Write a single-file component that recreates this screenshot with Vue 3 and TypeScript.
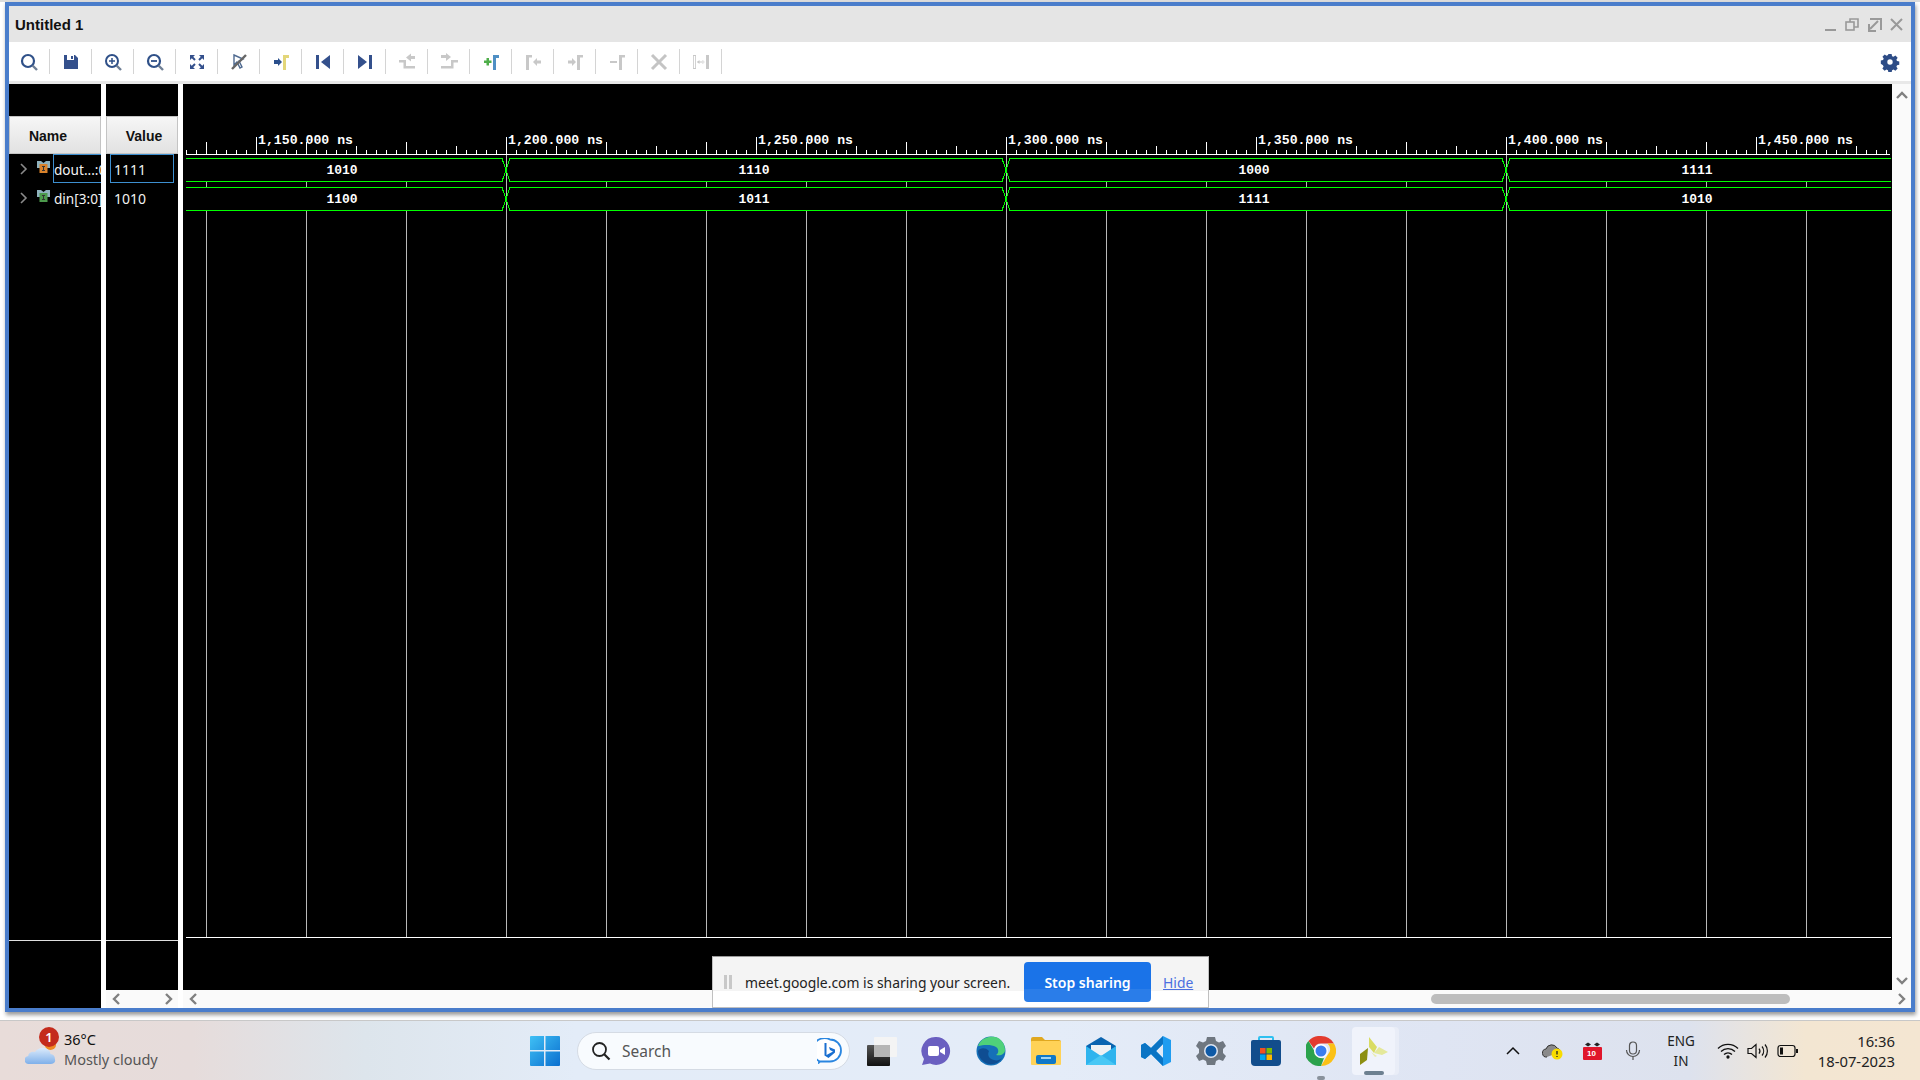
<script setup lang="ts">
interface SignalRow {
  name: string
  value: string
  selected: boolean
  kind: 'out' | 'in'
}

const rows: SignalRow[] = [
  { name: 'dout...:0', value: '1111', selected: true, kind: 'out' },
  { name: 'din[3:0]', value: '1010', selected: false, kind: 'in' }
]

const start = 186
const end = 1891
const edges = [506, 1006, 1506]

const busRows = [
  { top: 158.5, bottom: 181.5, mid: 174, values: ['1010', '1110', '1000', '1111'] },
  { top: 187.5, bottom: 210.5, mid: 203, values: ['1100', '1011', '1111', '1010'] }
]
const valueX = [342, 754, 1254, 1697]

const labels = [
  { x: 257, text: '1,150.000 ns' },
  { x: 507, text: '1,200.000 ns' },
  { x: 757, text: '1,250.000 ns' },
  { x: 1007, text: '1,300.000 ns' },
  { x: 1257, text: '1,350.000 ns' },
  { x: 1507, text: '1,400.000 ns' },
  { x: 1757, text: '1,450.000 ns' }
]

const smallTicks: number[] = []
for (let x = start; x <= end; x += 10) smallTicks.push(x + 0.5)

const mediumTicks: number[] = []
for (let x = 206; x <= end; x += 50) mediumTicks.push(x + 0.5)

const gridLines: number[] = []
for (let x = 206; x <= 1806; x += 100) gridLines.push(x + 0.5)

function busPath(top: number, bottom: number, from: number): string {
  let d = `M${start} ${from}`
  let y = from
  for (const e of edges) {
    y = y === top ? bottom : top
    d += `H${e - 4}L${e + 4} ${y}`
  }
  return d + `H${end}`
}

const apps = ['teams', 'edge', 'explorer', 'mail', 'code', 'settings', 'store', 'chrome']
</script>

<template>
  <div class="screen">
    <div class="window">
      <div class="titlebar">
        <span class="title">Untitled 1</span>
        <div class="win-controls">
          <svg width="22" height="18" viewBox="0 0 22 18"><path d="M5 14h11" stroke="#999" stroke-width="2" /></svg>
          <svg width="22" height="18" viewBox="0 0 22 18" fill="none" stroke="#999" stroke-width="1.6"><rect x="4" y="6" width="8" height="8" /><path d="M8 6V3h8v8h-4" /></svg>
          <svg width="22" height="18" viewBox="0 0 22 18" fill="none" stroke="#999" stroke-width="2"><path d="M6 3h11v11M14 5l-8 8M5 8v7h7" /></svg>
          <svg width="22" height="18" viewBox="0 0 22 18" fill="none" stroke="#999" stroke-width="2"><path d="M5 3l11 11M16 3L5 14" /></svg>
        </div>
      </div>

      <div class="toolbar">
        <button class="tool">
          <svg width="20" height="20" viewBox="0 0 20 20" fill="none"><circle cx="9" cy="9" r="6" stroke="#2f5088" stroke-width="2.200" /><path d="M13.500 13.500L18 18" stroke="#6f7f95" stroke-width="2.400" /></svg>
        </button>
        <button class="tool">
          <svg width="18" height="18" viewBox="0 0 18 18"><path d="M2 2h11l3 3v11H2z" fill="#34508c" /><rect x="5" y="2" width="7" height="5" fill="#fff" /><rect x="9" y="3" width="2" height="3" fill="#34508c" /></svg>
        </button>
        <button class="tool">
          <svg width="20" height="20" viewBox="0 0 20 20" fill="none"><circle cx="9" cy="9" r="6" stroke="#2f5088" stroke-width="2" /><path d="M6 9h6M9 6v6" stroke="#2f5088" stroke-width="1.500" /><path d="M13.500 13.500L18 18" stroke="#6f7f95" stroke-width="2.400" /></svg>
        </button>
        <button class="tool">
          <svg width="20" height="20" viewBox="0 0 20 20" fill="none"><circle cx="9" cy="9" r="6" stroke="#2f5088" stroke-width="2.200" /><path d="M6 9h6" stroke="#2f5088" stroke-width="1.800" /><path d="M13.500 13.500L18 18" stroke="#6f7f95" stroke-width="2.400" /></svg>
        </button>
        <button class="tool">
          <svg width="18" height="18" viewBox="0 0 18 18" fill="#34508c" stroke="none">
            <path d="M2 2h5L2 7zM16 2v5l-5-5zM2 16v-5l5 5zM16 16h-5l5-5z" />
            <path d="M4 4l3 3M14 4l-3 3M4 14l3-3M14 14l-3-3" stroke="#34508c" stroke-width="2" fill="none" />
          </svg>
        </button>
        <button class="tool">
          <svg width="20" height="20" viewBox="0 0 20 20" fill="none"><path d="M5 3l9 4-4 2 3 6-2 1-3-6-3 3z" stroke="#4f6a90" stroke-width="1.400" /><path d="M3 17L17 3" stroke="#666" stroke-width="2.400" /></svg>
        </button>
        <button class="tool">
          <svg width="20" height="20" viewBox="0 0 20 20"><path d="M3 8h4V6l4 4-4 4v-2H3z" fill="#2a4f8c" /><path d="M12 18V3h6v3h-3v12z" fill="#e3d679" /></svg>
        </button>
        <button class="tool">
          <svg width="18" height="18" viewBox="0 0 18 18" fill="#34508c"><rect x="2" y="2" width="3" height="14" /><path d="M16 2v14L7 9z" /></svg>
        </button>
        <button class="tool">
          <svg width="18" height="18" viewBox="0 0 18 18" fill="#34508c"><rect x="13" y="2" width="3" height="14" /><path d="M2 2v14l9-7z" /></svg>
        </button>
        <button class="tool">
          <svg width="20" height="20" viewBox="0 0 20 20" fill="#c8c8c8"><path d="M2 8h7v6h9v2.500H6.500v-6H2zM18 4v3h-4v2.500l-5-4 5-4V4z" /></svg>
        </button>
        <button class="tool">
          <svg width="20" height="20" viewBox="0 0 20 20" fill="#c8c8c8"><path d="M2 3h5V1l5 4-5 4V6H2zM2 14h10V8h7v2.500h-4.500V16.500H2z" /></svg>
        </button>
        <button class="tool">
          <svg width="20" height="20" viewBox="0 0 20 20"><path d="M3 8.500h2.500V6H8v2.500h2.500V11H8v2.500H5.500V11H3z" fill="#4fae4a" /><path d="M12 18V3h6v3h-3v12z" fill="#4f8fc4" /></svg>
        </button>
        <button class="tool">
          <svg width="20" height="20" viewBox="0 0 20 20" fill="#c8c8c8"><path d="M3 18V3h6v2.500H6V18zM18 8.500v3h-4V14l-4-4 4-4v2.500z" /></svg>
        </button>
        <button class="tool">
          <svg width="20" height="20" viewBox="0 0 20 20" fill="#c8c8c8"><path d="M3 8.500h4V6l4 4-4 4v-2.500H3zM12 18V3h6v2.500h-3V18z" /></svg>
        </button>
        <button class="tool">
          <svg width="20" height="20" viewBox="0 0 20 20" fill="#c8c8c8"><path d="M3 9h7v2H3zM12 18V3h6v2.500h-3V18z" /></svg>
        </button>
        <button class="tool">
          <svg width="20" height="20" viewBox="0 0 20 20" fill="none" stroke="#c4c4c4" stroke-width="3"><path d="M3 3l14 14M17 3L3 17" /></svg>
        </button>
        <button class="tool">
          <svg width="20" height="20" viewBox="0 0 20 20" fill="#c8c8c8"><path d="M2 3h3v14H2zM2.800 4v12h1.400V4z" fill-rule="evenodd" /><path d="M15 3h3v14h-3z" /><path d="M6 9.600h8v.8H6zM6 10l2.500-2v4zM14 10l-2.500-2v4z" /></svg>
        </button>
        <svg class="gear" width="20" height="20" viewBox="0 0 20 20">
          <path fill="#2d4c86" fill-rule="evenodd" d="M8.200 1h3.600l.5 2.500 1.600.7 2.100-1.400 2.500 2.500-1.400 2.100.7 1.600 2.500.5v3.600l-2.500.5-.7 1.600 1.400 2.100-2.500 2.500-2.100-1.400-1.600.7-.5 2.500H8.200l-.5-2.500-1.600-.7-2.100 1.400-2.500-2.500 1.400-2.100-.7-1.600L-.2 11.900V8.300l2.500-.5.7-1.600-1.400-2.100 2.500-2.500 2.100 1.400 1.600-.7zM10 7a3 3 0 1 0 0 6 3 3 0 0 0 0-6z" transform="translate(1 1) scale(.9)" />
        </svg>
      </div>

      <div class="panes">
        <div class="col name-col">
          <div class="col-head">Name</div>
          <div class="col-rows">
            <div v-for="row in rows" :key="row.name" class="signal">
              <svg class="expander" width="10" height="14" viewBox="0 0 10 14" fill="none"><path d="M2 2l5 5-5 5" stroke="#8a8a8a" stroke-width="1.600" /></svg>
              <svg class="bus-icon" width="13" height="13" viewBox="0 0 13 13">
                <path d="M0 0h4l2.500 2L9 0h4v7H0z" fill="#8fb2bd" />
                <rect x="2.500" y="3" width="8" height="9" :fill="row.kind === 'out' ? '#d9822b' : '#4c9a4c'" />
                <path d="M5 5.500h3M6.500 5.500v4M5 9.500h3" stroke="#333" stroke-width="1" fill="none" />
              </svg>
              <span class="signal-name" :class="{ selected: row.selected }">{{ row.name }}</span>
            </div>
          </div>
        </div>

        <div class="col value-col">
          <div class="col-head">Value</div>
          <div class="col-rows">
            <div v-for="row in rows" :key="row.name" class="value-row" :class="{ selected: row.selected }">{{ row.value }}</div>
          </div>
          <div class="col-foot"></div>
          <div class="hscroll">
            <svg width="12" height="14" viewBox="0 0 12 14" fill="none"><path d="M9 2L4 7l5 5" stroke="#808080" stroke-width="2.400" /></svg>
            <svg width="12" height="14" viewBox="0 0 12 14" fill="none"><path d="M3 2l5 5-5 5" stroke="#808080" stroke-width="2.400" /></svg>
          </div>
        </div>

        <div class="wave-col">
          <div class="wave-main">
            <svg class="wave" width="1709" height="906" viewBox="183 84 1709 906">
              <g stroke="#fff" stroke-width="1" shape-rendering="crispEdges">
                <path :d="`M${start} 154.500H1890`" stroke-width="1" />
                <path v-for="x in smallTicks" :key="'s' + x" :d="`M${x} 150V155`" />
                <path v-for="x in mediumTicks" :key="'m' + x" :d="`M${x} 146V155`" />
                <path v-for="x in gridLines" :key="'g' + x" :d="`M${x} 142V155`" />
                <path v-for="l in labels" :key="'t' + l.x" :d="`M${l.x - 0.5} 137V155`" />
                <path :d="`M${start} 937.500H1891`" />
              </g>
              <g stroke="#b9b9b9" stroke-width="1" shape-rendering="crispEdges">
                <template v-for="x in gridLines" :key="'l' + x">
                  <path :d="`M${x} 182V187M${x} 211V937`" />
                </template>
                <path v-for="e in edges" :key="'e' + e" :d="`M${e + 0.5} 155V937`" />
              </g>
              <g fill="none" stroke="#00ff00" stroke-width="1" shape-rendering="crispEdges">
                <template v-for="bus in busRows" :key="bus.top">
                  <path :d="busPath(bus.top, bus.bottom, bus.top)" />
                  <path :d="busPath(bus.top, bus.bottom, bus.bottom)" />
                </template>
              </g>
              <g class="wave-text">
                <text v-for="l in labels" :key="l.text" class="ruler-label" :x="l.x + 1" y="144">{{ l.text }}</text>
                <template v-for="bus in busRows" :key="'v' + bus.top">
                  <text v-for="(v, i) in bus.values" :key="i" :x="valueX[i]" :y="bus.mid" text-anchor="middle">{{ v }}</text>
                </template>
              </g>
            </svg>
            <div class="vscroll">
              <svg width="14" height="10" viewBox="0 0 14 10" fill="none"><path d="M2 8l5-5 5 5" stroke="#808080" stroke-width="2.400" /></svg>
              <svg width="14" height="10" viewBox="0 0 14 10" fill="none"><path d="M2 2l5 5 5-5" stroke="#808080" stroke-width="2.400" /></svg>
            </div>
          </div>
          <div class="hscroll wave-scroll">
            <svg width="12" height="14" viewBox="0 0 12 14" fill="none"><path d="M9 2L4 7l5 5" stroke="#808080" stroke-width="2.400" /></svg>
            <div class="thumb"></div>
            <svg width="12" height="14" viewBox="0 0 12 14" fill="none"><path d="M3 2l5 5-5 5" stroke="#808080" stroke-width="2.400" /></svg>
          </div>
        </div>
      </div>
    </div>

    <div class="sharebar">
      <span class="pause"><i></i><i></i></span>
      <span class="share-text">meet.google.com is sharing your screen.</span>
      <button class="stop">Stop sharing</button>
      <a class="hide">Hide</a>
    </div>

    <div class="taskbar">
      <div class="weather">
        <div class="weather-icon">
          <svg width="31" height="26" viewBox="0 0 28 26" preserveAspectRatio="none">
            <defs><linearGradient id="cloudFill" x1="0" y1="0" x2="0" y2="1"><stop offset="0" stop-color="#dcebfb" /><stop offset="1" stop-color="#7fb0ea" /></linearGradient></defs>
            <circle cx="23" cy="7" r="5" fill="#f08a24" />
            <path d="M4 26a4 4 0 0 1-1-8c0-3 3-5 6-4 2-4 9-6 12-2 1 1 2 2 2 4a5 5 0 0 1 4 5c1 3-1 5-4 5z" fill="url(#cloudFill)" />
          </svg>
          <span class="badge">1</span>
        </div>
        <div class="weather-text">
          <span class="temp">36°C</span>
          <span class="cond">Mostly cloudy</span>
        </div>
      </div>

      <svg class="start" width="30" height="30" viewBox="0 0 30 30">
        <defs><linearGradient id="winFill" x1="0" y1="0" x2="1" y2="1"><stop offset="0" stop-color="#3fc0f5" /><stop offset="1" stop-color="#0a6fcf" /></linearGradient></defs>
        <path d="M1 0h13v14H0V1a1 1 0 0 1 1-1zM15.500 0H29a1 1 0 0 1 1 1v13H15.500zM0 15.500h14V30H1a1 1 0 0 1-1-1zM15.500 15.500H30V29a1 1 0 0 1-1 1H15.500z" fill="url(#winFill)" />
      </svg>

      <div class="search">
        <svg width="20" height="20" viewBox="0 0 20 20" fill="none"><circle cx="8.500" cy="8.500" r="6.500" stroke="#222" stroke-width="1.800" /><path d="M13 13l5.500 5.500" stroke="#222" stroke-width="2.200" /></svg>
        <span>Search</span>
        <svg class="bing" width="26" height="26" viewBox="0 0 26 26">
          <path d="M13 1.500a11 11 0 0 1 0 22H3l-1 1v-1.500A11 11 0 0 1 13 1.500z" fill="#fff" stroke="#2a86e0" stroke-width="1.800" />
          <path d="M9.500 5v12l6.500-3.500-3-1.500-1-3 6 2.500v3L11.500 20l-4-2.500V5z" fill="#1a6fd0" />
        </svg>
      </div>

      <div class="apps">
        <div class="app">
          <svg width="32" height="30" viewBox="0 0 32 30">
            <defs><linearGradient id="taskFront" x1="0" y1="0" x2="0" y2="1"><stop offset="0" stop-color="#555" /><stop offset="1" stop-color="#111" /></linearGradient></defs>
            <rect x="2" y="9" width="23" height="21" rx="1" fill="url(#taskFront)" />
            <rect x="9" y="1" width="23" height="20" rx="1" fill="#f4f4f4" />
            <rect x="9" y="9" width="16" height="12" fill="#b5b5b5" />
          </svg>
        </div>
        <div v-for="app in apps" :key="app" class="app">
          <svg v-if="app === 'teams'" width="30" height="30" viewBox="0 0 30 30">
            <path d="M15 1a14 14 0 1 1-6 26.600L1 29l2-6A14 14 0 0 1 15 1z" fill="#6a5fc0" />
            <rect x="7" y="10" width="11" height="10" rx="2" fill="#fff" /><path d="M19 14l5-3v8l-5-3z" fill="#fff" />
          </svg>
          <svg v-else-if="app === 'edge'" width="30" height="30" viewBox="0 0 30 30">
            <circle cx="15" cy="15" r="14.500" fill="#1570b8" />
            <path d="M2 10C5 2 13 0 19 1c6 1 10 7 10 13 0 4-4 6-9 5 3-2 3-6 0-8-5-3-13-2-18-1z" fill="#4fd17a" />
            <path d="M13 15c-2 4 0 8 5 9 3 1 6 0 8-2-3 5-8 7-13 6-6-1-11-7-11-13 2-3 7-4 11 0z" fill="#0f4d92" />
          </svg>
          <svg v-else-if="app === 'explorer'" width="30" height="28" viewBox="0 0 30 28">
            <path d="M0 2a2 2 0 0 1 2-2h9l3 3h14a2 2 0 0 1 2 2v4H0z" fill="#e0a820" />
            <rect y="4" width="30" height="24" rx="1" fill="#ffd257" />
            <rect x="5" y="18" width="20" height="9" rx="2" fill="#0f78c8" />
            <rect x="10" y="20" width="10" height="2" fill="#9fd4f5" />
          </svg>
          <svg v-else-if="app === 'mail'" width="30" height="28" viewBox="0 0 30 28">
            <path d="M0 9L15 0l15 9v19H0z" fill="#0a64b0" />
            <path d="M5 8h20v6l-10 7L5 14z" fill="#eef1f4" />
            <path d="M0 9l15 10L30 9v19H0z" fill="#2fb4ee" />
            <path d="M0 28l15-10 15 10z" fill="#49c8f5" />
          </svg>
          <svg v-else-if="app === 'code'" width="30" height="30" viewBox="0 0 30 30">
            <path d="M22 0l8 4v22l-8 4-12-12-6 5-4-2V9l4-2 6 5zM22 8l-7 7 7 7z" fill="#1f9cf0" fill-rule="evenodd" />
            <path d="M22 0L10 12 4 7 0 9v12l4 2 6-5 12 12v-8l-7-7 7-7z" fill="#0a74c4" />
          </svg>
          <svg v-else-if="app === 'settings'" width="30" height="28" viewBox="0 0 30 28">
            <path fill="#6f7780" fill-rule="evenodd" d="M11 0h8l1 4 3 1.500 4-1.500 3 5-3 3v4l3 3-3 5-4-1.500-3 1.500-1 4h-8l-1-4-3-1.500-4 1.500-3-5 3-3v-4L0 9l3-5 4 1.500L10 4z" />
            <circle cx="15" cy="14" r="7" fill="#dfe6f2" /><circle cx="15" cy="14" r="5.500" fill="#0f5aa6" />
          </svg>
          <svg v-else-if="app === 'store'" width="30" height="30" viewBox="0 0 30 30">
            <path d="M8 5V2a1 1 0 0 1 1-1h12a1 1 0 0 1 1 1v3" fill="none" stroke="#2fc0f0" stroke-width="2" />
            <path d="M0 6a2 2 0 0 1 2-2h26a2 2 0 0 1 2 2v20a4 4 0 0 1-4 4H4a4 4 0 0 1-4-4z" fill="#124d8c" />
            <rect x="9" y="12" width="5.500" height="5.500" fill="#f25022" /><rect x="15.500" y="12" width="5.500" height="5.500" fill="#7fba00" />
            <rect x="9" y="18.500" width="5.500" height="5.500" fill="#00a4ef" /><rect x="15.500" y="18.500" width="5.500" height="5.500" fill="#ffb900" />
          </svg>
          <svg v-else width="30" height="30" viewBox="0 0 30 30">
            <path d="M15 0a15 15 0 0 1 13 7.500H15a7.500 7.500 0 0 0-7 5L2.500 5A15 15 0 0 1 15 0z" fill="#e33b2e" />
            <path d="M28 7.500A15 15 0 0 1 15 30l6.500-11a7.500 7.500 0 0 0 0-11.500z" fill="#fbc116" />
            <path d="M2.500 5L9 16a7.500 7.500 0 0 0 9 6l-3 8A15 15 0 0 1 2.500 5z" fill="#2ba24c" />
            <circle cx="15" cy="15" r="7" fill="#fff" /><circle cx="15" cy="15" r="5.500" fill="#3b7df0" />
          </svg>
          <span v-if="app === 'chrome'" class="running"></span>
        </div>
        <div class="app vivado">
          <svg width="28" height="29" viewBox="0 0 28 29">
            <path d="M9 1l8 10-3 6-5-6z" fill="#d9dc62" /><path d="M14 17l5-6 9 5-6 3z" fill="#e4e89a" />
            <path d="M0 18l8-6-1 12-7 5z" fill="#8d8f12" /><path d="M11 16l6 4-2 1z" fill="#e9ecb0" />
          </svg>
          <span class="running wide"></span>
        </div>
      </div>

      <div class="tray">
        <div class="tray-item w40"><svg width="14" height="10" viewBox="0 0 14 10" fill="none"><path d="M1 8l6-6 6 6" stroke="#111" stroke-width="1.500" /></svg></div>
        <div class="tray-item w40">
          <svg width="22" height="18" viewBox="0 0 22 18"><path d="M5 15a4 4 0 0 1-1-8 6 6 0 0 1 11-1 4 4 0 0 1 3 4" fill="#8a8a8a" stroke="#333" stroke-width="1" /><circle cx="15" cy="12" r="5.500" fill="#f8dc00" /><path d="M15 9v3.500M15 14v1" stroke="#222" stroke-width="1.300" /></svg>
        </div>
        <div class="tray-item w40">
          <svg width="20" height="18" viewBox="0 0 20 18"><rect y="5" width="19" height="13" rx="1" fill="#e0162b" /><path d="M2 2.500l3-2 3 2-3 2zM11 2.500l3-2 3 2-3 2z" fill="#222" /></svg>
          <span class="cal-num">10</span>
        </div>
        <div class="tray-item w40">
          <svg width="16" height="20" viewBox="0 0 16 20" fill="none" stroke="#555" stroke-width="1.200"><rect x="4.500" y="1" width="7" height="12" rx="3.500" /><path d="M1.500 9a6.500 6.500 0 0 0 13 0M8 15.500V19" /></svg>
        </div>
        <div class="lang"><span>ENG</span><span>IN</span></div>
        <div class="tray-item w30">
          <svg width="22" height="16" viewBox="0 0 22 16" fill="none" stroke="#111" stroke-width="1.300"><path d="M1 5.500a14 14 0 0 1 20 0M4 8.500a10 10 0 0 1 14 0M7 11.500a6 6 0 0 1 8 0" /><circle cx="11" cy="14" r="1" fill="#111" /></svg>
        </div>
        <div class="tray-item w30">
          <svg width="22" height="16" viewBox="0 0 22 16" fill="none" stroke="#111" stroke-width="1.200"><path d="M1 5.500h3.500L9 1.500v13l-4.500-4H1zM12 5.500a4 4 0 0 1 0 5M15 3.500a7 7 0 0 1 0 9M18 1.500a10 10 0 0 1 0 13" /></svg>
        </div>
        <div class="tray-item w30">
          <svg width="22" height="14" viewBox="0 0 22 14"><rect x="1" y="1.500" width="17" height="11" rx="2.500" fill="none" stroke="#111" stroke-width="1.200" /><rect x="3" y="3.500" width="3" height="7" fill="#111" /><path d="M19 5h2v4h-2z" fill="#111" /></svg>
        </div>
        <div class="clock"><span>16:36</span><span>18-07-2023</span></div>
      </div>
    </div>
  </div>
</template>

<style>
html,
body {
  margin: 0;
  overflow: hidden;
  background: #fff;
}
</style>

<style scoped>
.screen {
  position: relative;
  width: 1920px;
  height: 1080px;
  box-sizing: border-box;
  padding-top: 2px;
  display: flex;
  flex-direction: column;
  background: linear-gradient(#dcdcdc 0, #dcdcdc 2px, #fff 2px);
  font-family: "Noto Sans", sans-serif;
  overflow: hidden;
}

.window {
  margin: 0 5px;
  width: 1910px;
  height: 1010px;
  box-sizing: border-box;
  border: 4px solid #4a7dcb;
  box-shadow: 1px 3px 4px rgba(0, 0, 0, 0.4);
  display: flex;
  flex-direction: column;
}

.titlebar {
  height: 36px;
  background: #e5e5e5;
  display: flex;
  align-items: center;
  justify-content: space-between;
  padding-left: 6px;
}

.title {
  font: bold 15px "Liberation Sans", sans-serif;
  color: #111;
}

.win-controls {
  display: flex;
  margin-right: 3px;
  margin-top: 1px;
}

.toolbar {
  height: 39px;
  background: #fff;
  border-bottom: 3px solid #e8e8e8;
  display: flex;
  align-items: center;
  position: relative;
}

.tool {
  width: 42px;
  height: 25px;
  padding: 0;
  background: none;
  border: none;
  border-right: 1px solid #d4d4d4;
  display: flex;
  align-items: center;
  justify-content: center;
}

.tool:first-child {
  margin-left: -1px;
}

.gear {
  margin-left: auto;
  margin-right: 11px;
}

.panes {
  height: 924px;
  display: flex;
  gap: 5px;
  background: #fff;
}

.col {
  background: #000;
  display: flex;
  flex-direction: column;
  position: relative;
}

.name-col {
  width: 92px;
  overflow: hidden;
}

.value-col {
  width: 72px;
}

.col-head {
  margin-top: 32px;
  height: 38px;
  box-sizing: border-box;
  background: linear-gradient(#f6f6f6, #e2e2e2);
  border: 1px solid #c4c4c4;
  display: flex;
  align-items: center;
  justify-content: center;
  padding-top: 2px;
  font: bold 14px "Liberation Sans", sans-serif;
  color: #111;
}

.name-col .col-head {
  padding-right: 14px;
}

.value-col .col-head {
  padding-left: 4px;
}

.col-rows {
  height: 787px;
  box-sizing: border-box;
  border-bottom: 1px solid #e0e0e0;
}

.signal {
  height: 29px;
  display: flex;
  align-items: center;
  padding-left: 10px;
  color: #f2f2f2;
  font-size: 13.600px;
  white-space: nowrap;
}

.expander {
  margin-right: 8px;
  flex: none;
}

.bus-icon {
  margin-top: -3px;
  flex: none;
}

.signal-name {
  margin-left: 3px;
  height: 29px;
  line-height: 29px;
  box-sizing: border-box;
  border: 1px solid transparent;
  border-right: none;
  flex: none;
  width: 70px;
}

.signal-name.selected {
  border-color: #3d8fd0;
}

.value-row {
  height: 29px;
  width: 64px;
  margin-left: 4px;
  box-sizing: border-box;
  border: 1px solid transparent;
  padding-left: 3px;
  line-height: 29px;
  font-size: 14px;
  color: #f2f2f2;
}

.value-row.selected {
  border-color: #3d8fd0;
}

.col-foot {
  flex: 1;
}

.hscroll {
  height: 18px;
  background: #fafafa;
  display: flex;
  align-items: center;
  justify-content: space-between;
  padding: 0 3px 0 4px;
}

.wave-col {
  width: 1728px;
  display: flex;
  flex-direction: column;
}

.wave-main {
  height: 906px;
  display: flex;
}

.wave {
  display: block;
  background: #000;
  flex: none;
}

.wave-text {
  font: bold 13px "Liberation Mono", monospace;
  fill: #fff;
}

.ruler-label {
  font-size: 13.200px;
}

.vscroll {
  width: 19px;
  background: #fafafa;
  display: flex;
  flex-direction: column;
  justify-content: space-between;
  align-items: center;
  padding: 6px 0 4px;
  box-sizing: border-box;
}

.wave-scroll {
  position: relative;
}

.thumb {
  position: absolute;
  left: 1248px;
  top: 4px;
  width: 359px;
  height: 10px;
  border-radius: 5px;
  background: #bdbdbd;
}

.sharebar {
  position: absolute;
  left: 712px;
  top: 956px;
  width: 497px;
  height: 52px;
  box-sizing: border-box;
  background: linear-gradient(#f4f4f4 0, #f4f4f4 34px, #fff 34px);
  border: 1px solid #c0c0c0;
  border-top-color: #999;
  display: flex;
  align-items: center;
  font-size: 13.900px;
  color: #222;
}

.pause {
  display: flex;
  gap: 2px;
  margin: 0 13px 0 11px;
}

.pause i {
  width: 3px;
  height: 14px;
  background: #c8c8c8;
}

.share-text {
  width: 279px;
  white-space: nowrap;
}

.stop {
  width: 127px;
  height: 40px;
  border: none;
  border-radius: 4px;
  background: linear-gradient(#1a73e8 0, #1a73e8 27px, #2a7de9 27px);
  color: #fff;
  font: 600 14px "Noto Sans", sans-serif;
  padding: 0;
}

.hide {
  margin-left: 12px;
  color: #4a6fe0;
  text-decoration: underline;
}

.taskbar {
  margin-top: 8px;
  height: 60px;
  box-sizing: border-box;
  border-top: 1px solid #c8c8c8;
  background: linear-gradient(90deg, #e8dcd9 0, #e6dcdb 10%, #dde5ec 19%, #e3ecf8 30%, #e4ecf8 55%, #dfe5f3 75%, #dde2ee 88%, #f3e6d2 94%, #f4e6d2 100%);
  display: flex;
  align-items: center;
}

.weather {
  width: 530px;
  flex: none;
  display: flex;
  align-items: center;
  padding-left: 25px;
  box-sizing: border-box;
}

.weather-icon {
  position: relative;
  width: 39px;
  height: 42px;
  padding-top: 8px;
  box-sizing: border-box;
}

.weather-icon svg {
  display: block;
}

.badge {
  position: absolute;
  left: 14px;
  top: -3px;
  width: 20px;
  height: 20px;
  border-radius: 50%;
  background: #c42b1c;
  color: #fff;
  font-size: 13px;
  font-weight: 600;
  line-height: 20px;
  text-align: center;
}

.weather-text {
  display: flex;
  flex-direction: column;
  font-size: 14.500px;
  line-height: 20px;
  margin-top: -4px;
}

.temp {
  color: #111;
}

.cond {
  color: #555;
}

.start {
  flex: none;
}

.search {
  margin-left: 17px;
  width: 273px;
  height: 38px;
  box-sizing: border-box;
  border-radius: 19px;
  border: 1px solid #d5dbe4;
  background: #f8fbfe;
  display: flex;
  align-items: center;
  padding-left: 13px;
  font-size: 15.500px;
  color: #555;
  flex: none;
}

.search span {
  margin-left: 11px;
}

.bing {
  margin-left: auto;
  margin-right: 6px;
}

.apps {
  display: flex;
  margin-left: 3px;
  flex: none;
}

.app {
  position: relative;
  width: 55px;
  height: 58px;
  display: flex;
  align-items: center;
  justify-content: center;
}

.vivado {
  width: 43px;
  height: 48px;
  margin-left: 4px;
  border-radius: 4px;
  background: #f0f3fb;
  box-shadow: 4px 0 0 #e9edf7;
  align-self: center;
}

.running {
  position: absolute;
  bottom: 0;
  left: 50%;
  width: 8px;
  height: 4px;
  margin-left: -4px;
  border-radius: 2px;
  background: #8a929c;
}

.running.wide {
  width: 20px;
  margin-left: -10px;
  background: #6d8090;
}

.tray {
  margin-left: auto;
  padding-right: 25px;
  display: flex;
  align-items: center;
}

.tray-item {
  position: relative;
  height: 40px;
  display: flex;
  align-items: center;
  justify-content: center;
}

.w40 {
  width: 40px;
}

.w30 {
  width: 30px;
}

.cal-num {
  position: absolute;
  left: 14px;
  top: 18px;
  font: bold 8px "Liberation Sans", sans-serif;
  color: #fff;
}

.lang {
  width: 56px;
  margin-right: 4px;
  display: flex;
  flex-direction: column;
  align-items: center;
  font-size: 13.500px;
  line-height: 20px;
  color: #222;
}

.clock {
  width: 92px;
  display: flex;
  flex-direction: column;
  align-items: flex-end;
  font-size: 14.800px;
  line-height: 20px;
  color: #222;
}
</style>
